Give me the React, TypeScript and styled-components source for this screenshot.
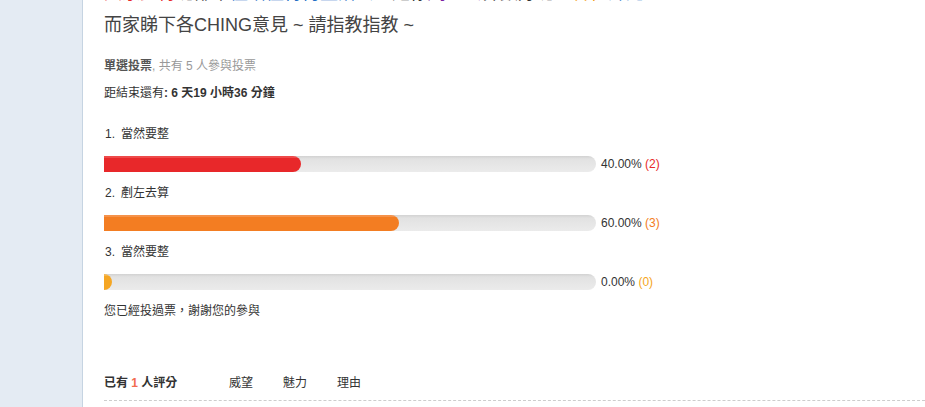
import React from "react";
import styled, { createGlobalStyle } from "styled-components";

const Global = createGlobalStyle`
  html, body { margin: 0; padding: 0; background: #fff; overflow: hidden; }
  body {
    font-family: "Liberation Sans", "Noto Sans CJK TC", sans-serif;
    font-size: 12px;
    color: #333;
  }
  #root { min-height: 100vh; }
`;

const Page = styled.div`
  display: flex;
  min-height: 100vh;
`;

const Sidebar = styled.aside`
  width: 82px;
  flex: none;
  background: #e4ebf3;
  border-right: 1px solid #c6d4e2;
`;

const Main = styled.main`
  flex: 1;
  padding-left: 21px;
  display: flex;
  flex-direction: column;
`;

const Title = styled.div`
  margin-top: -23px;
  font-size: 18px;
  line-height: 32px;
  color: #444;
  white-space: nowrap;
`;

const Tone = styled.span<{ $c: string }>`
  color: ${(p) => p.$c};
`;

const Meta = styled.div`
  margin-top: 16px;
  line-height: 18px;
  color: #999;
  & b { color: #555; }
`;

const Countdown = styled.div`
  margin-top: 9px;
  line-height: 18px;
  color: #333;
`;

const Options = styled.div`
  margin-top: 23px;
  display: flex;
  flex-direction: column;
  gap: 12px;
`;

const Option = styled.div`
  display: flex;
  flex-direction: column;
  gap: 13px;
`;

const Label = styled.div`
  line-height: 18px;
  color: #333;
  display: flex;
  gap: 6px;
  padding-left: 1px;
`;

const BarRow = styled.div`
  display: flex;
  align-items: center;
  gap: 5px;
  height: 16px;
`;

const Track = styled.div`
  width: 492px;
  height: 16px;
  border-radius: 0 8px 8px 0;
  background: linear-gradient(#d2d2d2 0, #e2e2e2 3px, #ebebeb 100%);
  overflow: hidden;
  display: flex;
`;

const Fill = styled.div<{ $c: string; $hi: string }>`
  height: 100%;
  min-width: 8px;
  border-radius: 0 8px 8px 0;
  background: linear-gradient(${(p) => p.$hi} 0, ${(p) => p.$hi} 2px, ${(p) => p.$c} 2px);
`;

const Pct = styled.span`
  line-height: 16px;
  color: #333;
  white-space: nowrap;
`;

const Count = styled.span<{ $c: string }>`
  color: ${(p) => p.$c};
`;

const Thanks = styled.div`
  margin-top: 12px;
  line-height: 18px;
  color: #333;
`;

const RateHead = styled.div`
  margin-top: 54px;
  display: grid;
  grid-template-columns: 125px 54px 54px 54px;
  line-height: 18px;
  padding-bottom: 8px;
  border-bottom: 1px dashed #cdcdcd;
  margin-right: -10px;
  color: #333;
`;

const RateTitle = styled.strong`
  & em { font-style: normal; color: #f26c4f; }
`;

const options = [
  { label: "當然要整", pct: 40, count: 2, c: "#e8282a", hi: "#ee4a4a" },
  { label: "剷左去算", pct: 60, count: 3, c: "#f37d22", hi: "#f5924a" },
  { label: "當然要整", pct: 0, count: 0, c: "#f5a623", hi: "#f7b74c" },
];

export default function App() {
  return (
    <>
      <Global />
      <Page>
        <Sidebar />
        <Main>
          <Title>
            <Tone $c="#e8282a">大家覺得</Tone>
            <Tone $c="#333">呢部車</Tone>
            <Tone $c="#1f6fc5">值唔值得再整落去</Tone>
            <Tone $c="#333">，定係</Tone>
            <Tone $c="#7b1fa2">剷左去</Tone>
            <Tone $c="#333">算數好呢？</Tone>
            <Tone $c="#f39c12">各位</Tone>
            <Tone $c="#1f6fc5">師兄</Tone>
            <br />
            而家睇下各CHING意見 ~ 請指教指教 ~
          </Title>
          <Meta>
            <b>單選投票</b>, 共有 5 人參與投票
          </Meta>
          <Countdown>
            距結束還有<b>: 6 天19 小時36 分鐘</b>
          </Countdown>
          <Options>
            {options.map((o, i) => (
              <Option key={i}>
                <Label>
                  <span>{i + 1}.</span>
                  <span>{o.label}</span>
                </Label>
                <BarRow>
                  <Track>
                    <Fill $c={o.c} $hi={o.hi} style={{ width: `${o.pct}%` }} />
                  </Track>
                  <Pct>
                    {o.pct.toFixed(2)}% <Count $c={o.c}>({o.count})</Count>
                  </Pct>
                </BarRow>
              </Option>
            ))}
          </Options>
          <Thanks>您已經投過票，謝謝您的參與</Thanks>
          <RateHead>
            <RateTitle>
              已有 <em>1</em> 人評分
            </RateTitle>
            <span>威望</span>
            <span>魅力</span>
            <span>理由</span>
          </RateHead>
        </Main>
      </Page>
    </>
  );
}
